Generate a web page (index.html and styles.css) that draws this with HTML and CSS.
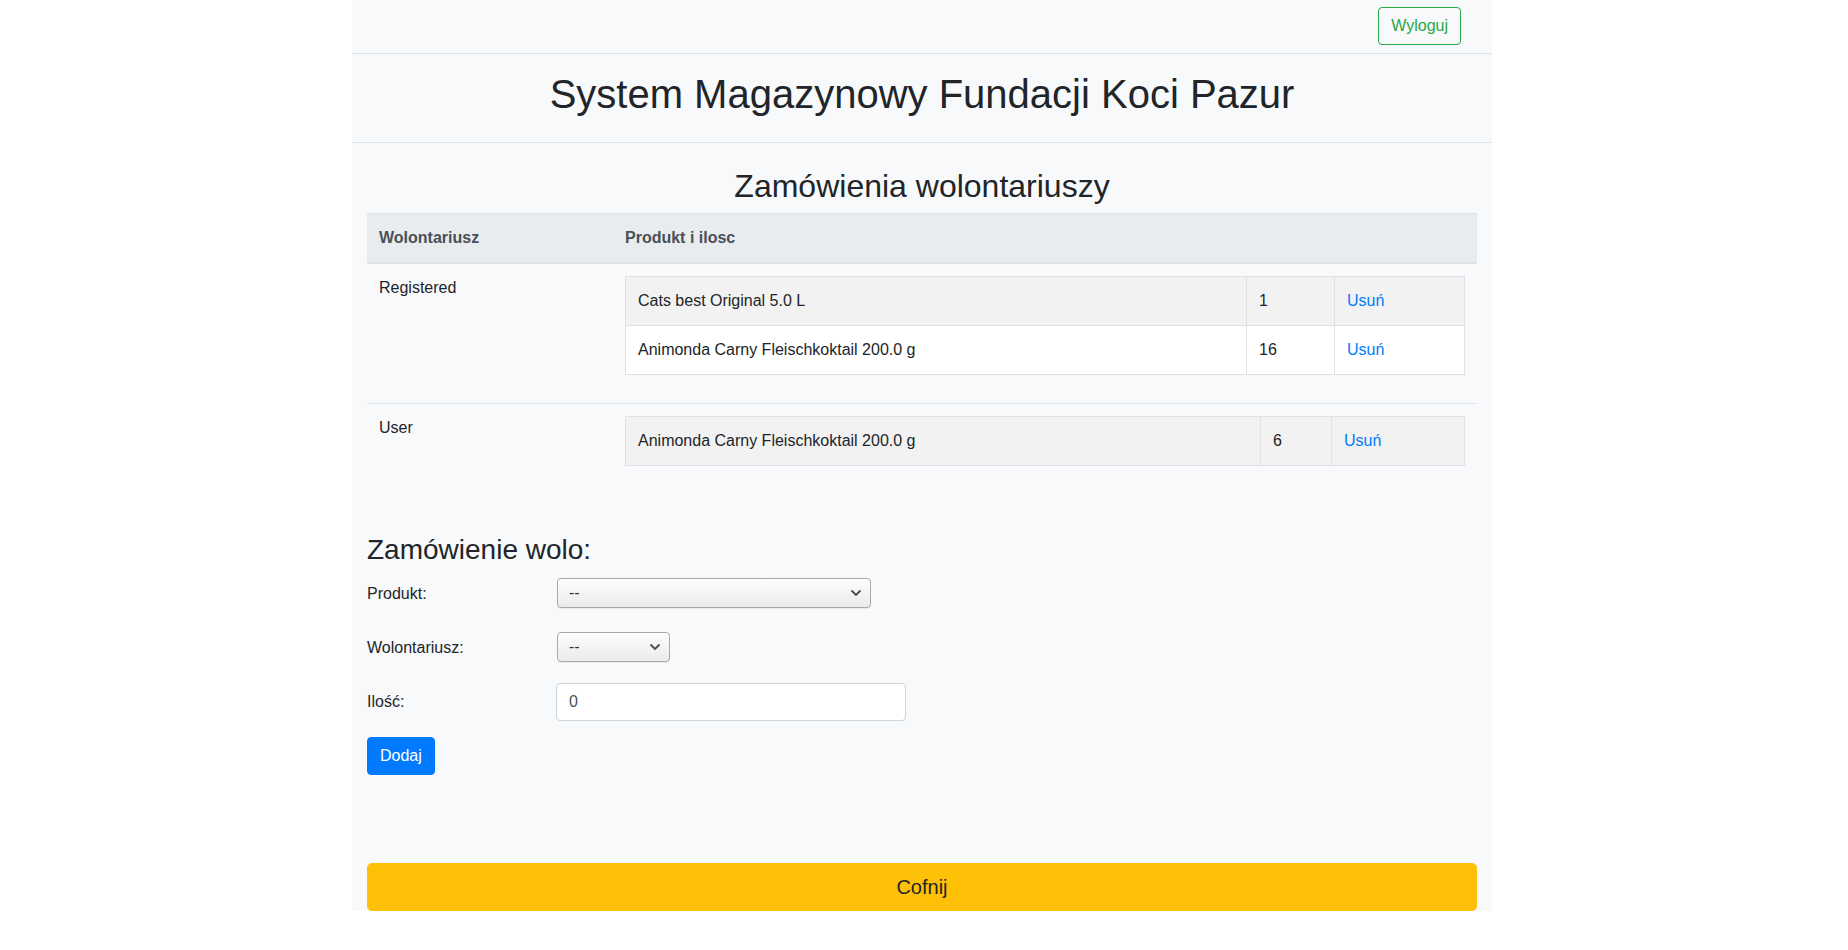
FILE: index.html
```html
<!DOCTYPE html>
<html lang="pl">
<head>
<meta charset="utf-8">
<title>System Magazynowy Fundacji Koci Pazur</title>
<link rel="stylesheet" href="styles.css">
</head>
<body>
<div class="container">
  <nav class="topnav">
    <button class="btn btn-outline-success" type="button">Wyloguj</button>
  </nav>
  <header class="page-header">
    <h1>System Magazynowy Fundacji Koci Pazur</h1>
  </header>
  <main class="content">
    <h2 class="section-title">Zamówienia wolontariuszy</h2>
    <table class="table main-table">
      <thead>
        <tr>
          <th class="col-vol">Wolontariusz</th>
          <th>Produkt i ilosc</th>
        </tr>
      </thead>
      <tbody>
        <tr>
          <td>Registered</td>
          <td>
            <table class="table nested">
              <tbody>
                <tr>
                  <td>Cats best Original 5.0 L</td>
                  <td class="qty-a">1</td>
                  <td class="act-a"><a href="#">Usuń</a></td>
                </tr>
                <tr>
                  <td>Animonda Carny Fleischkoktail 200.0 g</td>
                  <td class="qty-a">16</td>
                  <td class="act-a"><a href="#">Usuń</a></td>
                </tr>
              </tbody>
            </table>
          </td>
        </tr>
        <tr>
          <td>User</td>
          <td>
            <table class="table nested">
              <tbody>
                <tr>
                  <td>Animonda Carny Fleischkoktail 200.0 g</td>
                  <td class="qty-b">6</td>
                  <td class="act-b"><a href="#">Usuń</a></td>
                </tr>
              </tbody>
            </table>
          </td>
        </tr>
      </tbody>
    </table>

    <h3 class="form-title">Zamówienie wolo:</h3>
    <form class="order-form">
      <div class="form-row">
        <label class="form-label" for="produkt">Produkt:</label>
        <div class="field">
          <span class="select-wrap sel-product">
            <select id="produkt">
              <option>--</option>
              <option>Cats best Original 5.0 L</option>
              <option>Animonda Carny Fleischkoktail 200.0 g</option>
            </select>
            <svg class="chev" width="12" height="8" viewBox="0 0 12 8"><path d="M1.5 1.5 L6 6 L10.5 1.5" fill="none" stroke="#4a4a4a" stroke-width="1.8"/></svg>
          </span>
        </div>
      </div>
      <div class="form-row">
        <label class="form-label" for="wolontariusz">Wolontariusz:</label>
        <div class="field">
          <span class="select-wrap sel-vol">
            <select id="wolontariusz">
              <option>--</option>
              <option>Registered</option>
              <option>User</option>
            </select>
            <svg class="chev" width="12" height="8" viewBox="0 0 12 8"><path d="M1.5 1.5 L6 6 L10.5 1.5" fill="none" stroke="#4a4a4a" stroke-width="1.8"/></svg>
          </span>
        </div>
      </div>
      <div class="form-row">
        <label class="form-label" for="ilosc">Ilość:</label>
        <div class="field">
          <input id="ilosc" class="form-control" type="text" value="0">
        </div>
      </div>
      <button class="btn btn-primary" type="button">Dodaj</button>
    </form>

    <button class="btn btn-warning btn-block" type="button">Cofnij</button>
  </main>
</div>
</body>
</html>
```

FILE: styles.css
```css
*,
*::before,
*::after {
  box-sizing: border-box;
}

html, body {
  margin: 0;
  padding: 0;
}

body {
  background: #fff;
  color: #212529;
  font-family: "Liberation Sans", Arial, sans-serif;
  font-size: 16px;
  line-height: 1.5;
  padding-right: 4px;
}

.container {
  width: 1140px;
  margin: 0 auto;
  background: #f8f9fa;
}

/* top navigation */
.topnav {
  display: flex;
  justify-content: flex-end;
  padding: 7px 31px 8px 16px;
  border-bottom: 1px solid #dee2e6;
}

.btn {
  display: inline-block;
  font-family: inherit;
  font-size: 16px;
  line-height: 24px;
  padding: 6px 12px;
  border: 1px solid transparent;
  border-radius: 4px;
  background: transparent;
  cursor: pointer;
  text-align: center;
  margin: 0;
}

.btn-outline-success {
  color: #28a745;
  border-color: #28a745;
}

.btn-primary {
  color: #fff;
  background: #007bff;
  border-color: #007bff;
}

.btn-warning {
  color: #212529;
  background: #ffc107;
  border-color: #ffc107;
}

.btn-block {
  display: block;
  width: 100%;
  font-size: 20px;
  line-height: 30px;
  padding: 8px 16px;
  border-radius: 4.8px;
  margin-top: 88px;
}

/* header */
.page-header {
  padding: 16px 0;
  border-bottom: 1px solid #dee2e6;
}

.page-header h1 {
  margin: 0 0 8px;
  font-size: 40px;
  font-weight: 500;
  line-height: 1.2;
  text-align: center;
}

/* content */
.content {
  padding: 0 15px;
}

.section-title {
  margin: 24px 0 8px;
  font-size: 32px;
  font-weight: 500;
  line-height: 1.2;
  text-align: center;
}

.table {
  width: 100%;
  border-collapse: collapse;
  margin-bottom: 16px;
}

.table th,
.table td {
  padding: 12px;
  vertical-align: top;
  border-top: 1px solid #dee2e6;
  text-align: left;
}

.main-table thead th {
  vertical-align: bottom;
  background: #e9ecef;
  color: #495057;
  font-weight: 700;
  border-bottom: 2px solid #dee2e6;
}

.main-table .col-vol {
  width: 246px;
}

.nested {
  background: #fff;
}

.nested td {
  border: 1px solid #dee2e6;
}

.nested tbody tr:nth-child(odd) {
  background: #f2f2f2;
}

.qty-a { width: 88px; }
.act-a { width: 130px; }
.qty-b { width: 71px; }
.act-b { width: 133px; }

.nested a {
  color: #007bff;
  text-decoration: none;
}

/* form */
.form-title {
  margin: 39px 0 8px;
  font-size: 28px;
  font-weight: 500;
  line-height: 1.2;
}

.form-row {
  display: grid;
  grid-template-columns: 190px 350px;
  margin-bottom: 16px;
}

.form-label {
  padding: 7px 0;
  line-height: 24px;
}

.select-wrap {
  position: relative;
  display: inline-block;
  margin-top: 3px;
}

.select-wrap select {
  -webkit-appearance: none;
  appearance: none;
  display: block;
  height: 30px;
  font-family: inherit;
  font-size: 16px;
  line-height: 24px;
  color: #333;
  padding: 2px 30px 2px 11px;
  border: 1px solid #a9a9a9;
  border-radius: 4px;
  background: linear-gradient(#fdfdfd, #ebebeb);
  box-shadow: 0 1px 0 rgba(0, 0, 0, 0.06);
}

.sel-product select { width: 314px; }
.sel-vol select { width: 113px; }

.chev {
  position: absolute;
  right: 9px;
  top: 11px;
  pointer-events: none;
}

.form-control {
  display: block;
  width: 350px;
  height: 38px;
  padding: 6px 12px;
  font-family: inherit;
  font-size: 16px;
  line-height: 24px;
  color: #495057;
  background: #fff;
  border: 1px solid #ced4da;
  border-radius: 4px;
  margin-left: -1px;
}
```
